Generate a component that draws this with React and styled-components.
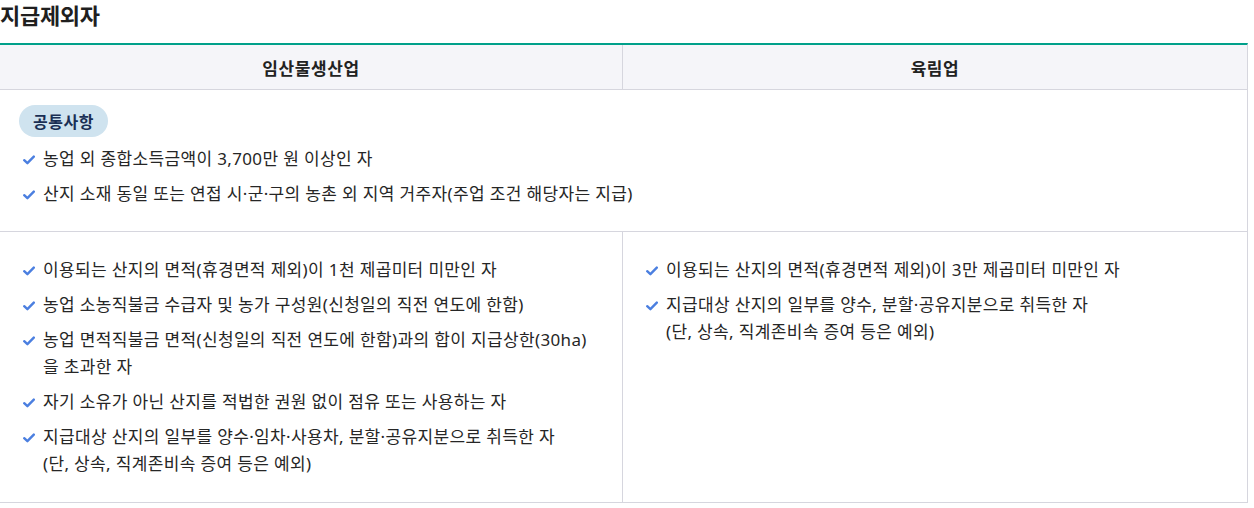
import React from 'react';
import styled, { createGlobalStyle } from 'styled-components';

const GlobalStyle = createGlobalStyle`
  body {
    margin: 0;
    background: #fff;
    font-family: 'Noto Sans', 'Noto Sans CJK KR', sans-serif;
    color: #333;
  }
`;

const StyledWrapper = styled.section`
  width: 1248px;
`;

const StyledTitle = styled.h2`
  margin: 0;
  height: 43px;
  font-size: 22px;
  line-height: 30px;
  font-weight: 700;
  color: #1f1f1f;
  letter-spacing: -0.3px;
`;

const StyledTable = styled.div`
  display: grid;
  grid-template-columns: 622px 1fr;
  border-top: 2px solid #00a08a;
  border-right: 1px solid #d6d6de;
`;

const StyledHeadCell = styled.div`
  height: 44px;
  display: flex;
  align-items: center;
  justify-content: center;
  background: #f5f5f9;
  border-bottom: 1px solid #d6d6de;
  border-left: ${({ divided }) => (divided ? '1px solid #d6d6de' : 'none')};
  font-size: 17px;
  font-weight: 700;
  letter-spacing: 0.6px;
  color: #222;
`;

const StyledCell = styled.div`
  grid-column: ${({ wide }) => (wide ? '1 / -1' : 'auto')};
  padding: ${({ wide }) => (wide ? '15px 19px 24px' : '24px 19px 25px')};
  border-bottom: 1px solid #d6d6de;
  border-left: ${({ divided }) => (divided ? '1px solid #d6d6de' : 'none')};
`;

const StyledBadge = styled.span`
  display: inline-flex;
  align-items: center;
  height: 32px;
  padding: 0 14px;
  margin-bottom: 8px;
  border-radius: 16px;
  background: #cfe3ef;
  color: #1a2f55;
  font-size: 16px;
  font-weight: 700;
  letter-spacing: 0.5px;
`;

const StyledList = styled.ul`
  margin: 0;
  padding: 0 0 0 4px;
  list-style: none;
`;

const StyledItem = styled.li`
  display: flex;
  align-items: flex-start;
  gap: 8px;
  font-size: 17px;
  line-height: 27px;
  color: #262626;
  letter-spacing: 0.35px;

  & + & {
    margin-top: 8px;
  }
`;

const StyledCheck = styled.svg`
  flex: none;
  width: 12px;
  height: 10px;
  margin-top: 10px;
`;

const Check = () => (
  <StyledCheck viewBox="0 0 12 10">
    <path
      d="M1.2 5.2 L4.4 8.2 L10.8 1.6"
      fill="none"
      stroke="#4b7fe0"
      strokeWidth="2.4"
      strokeLinecap="round"
      strokeLinejoin="round"
    />
  </StyledCheck>
);

const Item = ({ children }) => (
  <StyledItem>
    <Check />
    <span>{children}</span>
  </StyledItem>
);

const common = [
  '농업 외 종합소득금액이 3,700만 원 이상인 자',
  '산지 소재 동일 또는 연접 시·군·구의 농촌 외 지역 거주자(주업 조건 해당자는 지급)',
];

const forestProducts = [
  ['이용되는 산지의 면적(휴경면적 제외)이 1천 제곱미터 미만인 자'],
  ['농업 소농직불금 수급자 및 농가 구성원(신청일의 직전 연도에 한함)'],
  ['농업 면적직불금 면적(신청일의 직전 연도에 한함)과의 합이 지급상한(30ha)', '을 초과한 자'],
  ['자기 소유가 아닌 산지를 적법한 권원 없이 점유 또는 사용하는 자'],
  ['지급대상 산지의 일부를 양수·임차·사용차, 분할·공유지분으로 취득한 자', '(단, 상속, 직계존비속 증여 등은 예외)'],
];

const forestry = [
  ['이용되는 산지의 면적(휴경면적 제외)이 3만 제곱미터 미만인 자'],
  ['지급대상 산지의 일부를 양수, 분할·공유지분으로 취득한 자', '(단, 상속, 직계존비속 증여 등은 예외)'],
];

const renderLines = (lines) =>
  lines.map((line, i) => (
    <React.Fragment key={line}>
      {i > 0 && <br />}
      {line}
    </React.Fragment>
  ));

const App = () => (
  <StyledWrapper>
    <GlobalStyle />
    <StyledTitle>지급제외자</StyledTitle>
    <StyledTable>
      <StyledHeadCell>임산물생산업</StyledHeadCell>
      <StyledHeadCell divided>육림업</StyledHeadCell>

      <StyledCell wide>
        <StyledBadge>공통사항</StyledBadge>
        <StyledList>
          {common.map((text) => (
            <Item key={text}>{text}</Item>
          ))}
        </StyledList>
      </StyledCell>

      <StyledCell>
        <StyledList>
          {forestProducts.map((lines) => (
            <Item key={lines[0]}>{renderLines(lines)}</Item>
          ))}
        </StyledList>
      </StyledCell>
      <StyledCell divided>
        <StyledList>
          {forestry.map((lines) => (
            <Item key={lines[0]}>{renderLines(lines)}</Item>
          ))}
        </StyledList>
      </StyledCell>
    </StyledTable>
  </StyledWrapper>
);

export default App;
